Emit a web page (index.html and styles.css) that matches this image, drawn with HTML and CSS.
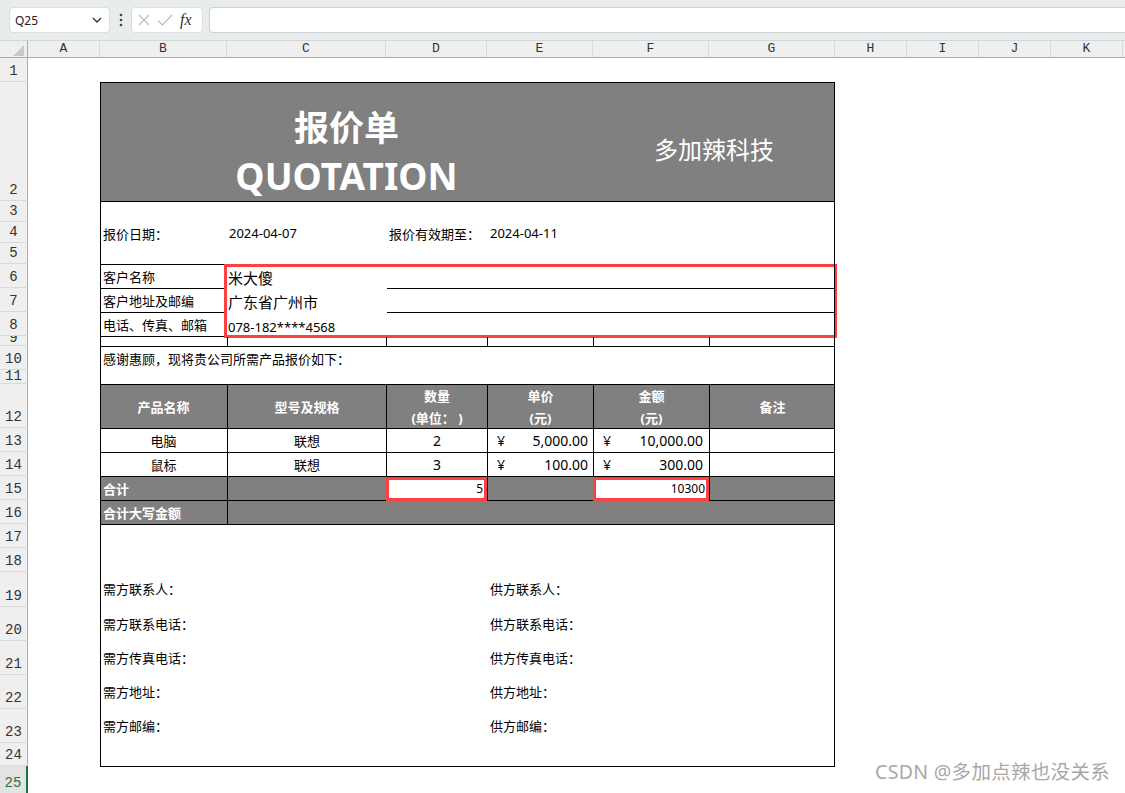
FILE: index.html
```html
<!DOCTYPE html>
<html lang="zh-CN">
<head>
<meta charset="utf-8">
<title>报价单</title>
<link rel="stylesheet" href="styles.css">
</head>
<body>
<div class="app">
  <div class="formula-bar">
    <div class="name-box">
      <span class="name">Q25</span>
      <svg class="chev" width="10" height="6" viewBox="0 0 10 6"><path d="M1 1l4 4 4-4" fill="none" stroke="#333" stroke-width="1.3"/></svg>
    </div>
    <div class="bar-dots">
      <svg width="4" height="14" viewBox="0 0 4 14"><circle cx="2" cy="2" r="1.3" fill="#444"/><circle cx="2" cy="7" r="1.3" fill="#444"/><circle cx="2" cy="12" r="1.3" fill="#444"/></svg>
    </div>
    <div class="fx-box">
      <svg width="14" height="14" viewBox="0 0 14 14"><path d="M2 2l10 10M12 2L2 12" fill="none" stroke="#bcbcbc" stroke-width="1.2"/></svg>
      <svg width="16" height="14" viewBox="0 0 16 14"><path d="M1 7.5l4.5 4.5L15 2" fill="none" stroke="#bcbcbc" stroke-width="1.2"/></svg>
      <span class="fx">fx</span>
    </div>
    <div class="formula-input"></div>
  </div>

  <div class="col-headers">
    <div class="corner"><svg width="27" height="16" viewBox="0 0 27 16"><polygon points="24,3 24,14 13,14" fill="#c9c9c9"/></svg></div>
    <div class="ch wa">A</div>
    <div class="ch wb">B</div>
    <div class="ch wc">C</div>
    <div class="ch wd">D</div>
    <div class="ch we">E</div>
    <div class="ch wf">F</div>
    <div class="ch wg">G</div>
    <div class="ch wa">H</div>
    <div class="ch wa">I</div>
    <div class="ch wa">J</div>
    <div class="ch wa">K</div>
  </div>

  <div class="sheet">
    <div class="row-headers">
      <div class="rh h24">1</div>
      <div class="rh h119">2</div>
      <div class="rh h21">3</div>
      <div class="rh h21">4</div>
      <div class="rh h21">5</div>
      <div class="rh h24">6</div>
      <div class="rh h24">7</div>
      <div class="rh h24">8</div>
      <div class="rh h10">9</div>
      <div class="rh h24">10</div>
      <div class="rh h14">11</div>
      <div class="rh h44">12</div>
      <div class="rh h24">13</div>
      <div class="rh h24">14</div>
      <div class="rh h24">15</div>
      <div class="rh h24">16</div>
      <div class="rh h24">17</div>
      <div class="rh h24">18</div>
      <div class="rh h35">19</div>
      <div class="rh h34">20</div>
      <div class="rh h34">21</div>
      <div class="rh h34">22</div>
      <div class="rh h34">23</div>
      <div class="rh h23">24</div>
      <div class="rh h27 sel">25</div>
    </div>

    <div class="canvas">
      <div class="quote">
        <div class="q-title">
          <div class="title-main">
            <div class="t-cn">报价单</div>
            <div class="t-en">QUOTATION</div>
          </div>
          <div class="title-co">多加辣科技</div>
        </div>

        <div class="q-dates">
          <div class="dc">报价日期：</div>
          <div class="dc">2024-04-07</div>
          <div class="dc">报价有效期至：</div>
          <div class="dc">2024-04-11</div>
        </div>

        <div class="q-customer">
          <div class="cust-top">
            <div class="cust-labels">
              <div class="lbl">客户名称</div>
              <div class="lbl">客户地址及邮编</div>
              <div class="lbl">电话、传真、邮箱</div>
            </div>
            <div class="cust-values">
              <div class="val">米大傻</div>
              <div class="rest"></div>
              <div class="val">广东省广州市</div>
              <div class="rest"></div>
              <div class="val tel">078-182****4568</div>
              <div class="rest"></div>
            </div>
          </div>
          <div class="cust-gap">
            <div class="gc"></div><div class="gc"></div><div class="gc"></div><div class="gc"></div><div class="gc"></div><div class="gc"></div>
          </div>
        </div>

        <div class="q-intro">感谢惠顾，现将贵公司所需产品报价如下：</div>

        <div class="q-items">
          <div class="ic head">产品名称</div>
          <div class="ic head">型号及规格</div>
          <div class="ic head">数量<br>(单位：&nbsp;)</div>
          <div class="ic head">单价<br>(元)</div>
          <div class="ic head">金额<br>(元)</div>
          <div class="ic head">备注</div>

          <div class="ic">电脑</div>
          <div class="ic">联想</div>
          <div class="ic num">2</div>
          <div class="ic money"><span>¥</span><span>5,000.00</span></div>
          <div class="ic money mf"><span>¥</span><span>10,000.00</span></div>
          <div class="ic"></div>

          <div class="ic">鼠标</div>
          <div class="ic">联想</div>
          <div class="ic num">3</div>
          <div class="ic money"><span>¥</span><span>100.00</span></div>
          <div class="ic money mf"><span>¥</span><span>300.00</span></div>
          <div class="ic"></div>

          <div class="ic gray strong left">合计</div>
          <div class="ic gray"></div>
          <div class="ic sum">5</div>
          <div class="ic gray"></div>
          <div class="ic sum">10300</div>
          <div class="ic gray"></div>

          <div class="ic gray strong left">合计大写金额</div>
          <div class="ic gray span5"></div>
        </div>

        <div class="q-sign">
          <div class="sg">需方联系人：</div><div class="sg">供方联系人：</div>
          <div class="sg">需方联系电话：</div><div class="sg">供方联系电话：</div>
          <div class="sg">需方传真电话：</div><div class="sg">供方传真电话：</div>
          <div class="sg">需方地址：</div><div class="sg">供方地址：</div>
          <div class="sg">需方邮编：</div><div class="sg">供方邮编：</div>
        </div>
      </div>
    </div>
  </div>

  <div class="watermark">CSDN @多加点辣也没关系</div>
</div>
</body>
</html>
```

FILE: styles.css
```css
* { box-sizing: border-box; margin: 0; padding: 0; }

html, body {
  width: 1125px;
  height: 793px;
  overflow: hidden;
  background: #fff;
}

body {
  font-family: "Noto Sans", "Noto Sans CJK SC", sans-serif;
  color: #000;
}

.app {
  position: relative;
  width: 1125px;
  height: 793px;
  overflow: hidden;
  display: flex;
  flex-direction: column;
}

/* ---------- formula bar ---------- */
.formula-bar {
  height: 41px;
  flex: none;
  background: #e9ecec;
  border-bottom: 1px solid #d3d6d6;
  display: flex;
  align-items: flex-start;
  padding: 7px 0 0 9px;
}

.name-box {
  width: 101px;
  height: 26px;
  background: #fff;
  border: 1px solid #dcdede;
  border-radius: 4px;
  display: flex;
  align-items: center;
  justify-content: space-between;
  padding: 0 7px 0 5px;
  font-size: 12px;
  color: #222;
}

.bar-dots {
  width: 21px;
  height: 26px;
  display: flex;
  align-items: center;
  justify-content: center;
}

.fx-box {
  width: 72px;
  height: 26px;
  background: #fff;
  border: 1px solid #dcdede;
  border-radius: 4px;
  display: flex;
  align-items: center;
  gap: 6px;
  padding-left: 5px;
}

.fx {
  font-family: "Liberation Serif", serif;
  font-style: italic;
  font-size: 16px;
  color: #333;
  margin-left: 1px;
}

.formula-input {
  flex: 1;
  margin-left: 6px;
  height: 26px;
  background: #fff;
  border: 1px solid #cfd2d2;
  border-right: none;
  border-radius: 4px 0 0 4px;
}

/* ---------- column headers ---------- */
.col-headers {
  height: 17px;
  flex: none;
  display: flex;
  background: #efefef;
  border-bottom: 1px solid #ababab;
}

.corner {
  width: 28px;
  flex: none;
  border-right: 1px solid #ababab;
}

.ch {
  flex: none;
  border-right: 1px solid #dadada;
  text-align: center;
  font-family: "Liberation Mono", monospace;
  font-size: 13px;
  line-height: 16px;
  color: #333;
}

.wa { width: 72px; }
.wb { width: 127px; }
.wc { width: 159px; }
.wd { width: 101px; }
.we { width: 106px; }
.wf { width: 116px; }
.wg { width: 126px; }

/* ---------- sheet ---------- */
.sheet {
  flex: 1;
  display: flex;
  min-height: 0;
}

.row-headers {
  width: 28px;
  flex: none;
  display: flex;
  flex-direction: column;
  background: #efefef;
}

.rh {
  flex: none;
  border-bottom: 1px solid #dadada;
  border-right: 1px solid #ababab;
  display: flex;
  align-items: flex-end;
  justify-content: center;
  overflow: hidden;
  font-family: "Liberation Mono", monospace;
  font-size: 14px;
  line-height: 16px;
  padding-bottom: 2px;
  color: #333;
}

.rh.sel {
  background: #e3e3e3;
  color: #217346;
  border-right: 2px solid #217346;
  border-bottom: none;
}

.h10 { height: 10px; padding-bottom: 0; line-height: 13px; }
.h14 { height: 14px; padding-bottom: 0; line-height: 13px; }
.h21 { height: 21px; }
.h23 { height: 23px; }
.h24 { height: 24px; }
.h27 { height: 27px; }
.h34 { height: 34px; }
.h35 { height: 35px; }
.h44 { height: 44px; }
.h119 { height: 119px; }

.canvas {
  flex: 1;
  background: #fff;
  padding: 24px 0 0 72px;
}

/* ---------- quotation ---------- */
.quote {
  --cols: 127px 159px 101px 106px 116px 126px;
  width: 735px;
  height: 685px;
  outline: 1px solid #000;
  outline-offset: -1px;
  display: flex;
  flex-direction: column;
  font-size: 13px;
}

.q-title {
  height: 120px;
  flex: none;
  display: grid;
  grid-template-columns: 493px 242px;
  background: #808080;
  border-bottom: 1px solid #000;
  color: #fff;
}

.title-main {
  display: flex;
  flex-direction: column;
  align-items: center;
  justify-content: center;
  padding-top: 21px;
}

.t-cn {
  font-size: 35px;
  font-weight: 700;
  line-height: 48px;
}

.t-en {
  font-size: 37px;
  font-weight: 700;
  line-height: 48px;
}

.title-co {
  display: flex;
  align-items: center;
  justify-content: center;
  padding-top: 14px;
  font-size: 24px;
}

.q-dates {
  height: 63px;
  flex: none;
  display: grid;
  grid-template-columns: var(--cols);
  align-items: center;
  border-bottom: 1px solid #000;
}

.dc { padding-left: 3px; }
.dc:nth-child(2) { padding-left: 2px; }

/* customer block */
.q-customer {
  height: 82px;
  flex: none;
  display: flex;
  flex-direction: column;
}

.cust-top {
  height: 72px;
  display: flex;
}

.cust-labels {
  width: 127px;
  flex: none;
  display: flex;
  flex-direction: column;
}

.lbl {
  height: 24px;
  border-bottom: 1px solid #000;
  display: flex;
  align-items: center;
  padding-left: 3px;
}

.cust-values {
  flex: 1;
  display: grid;
  grid-template-columns: 159px 449px;
  grid-template-rows: 24px 24px 24px;
  border-left: 1px solid #000;
  margin-left: -2px;
  margin-right: 2px;
  padding-left: 2px;
  outline: 3px solid #ff4040;
  outline-offset: -2px;
}

.val {
  display: flex;
  align-items: center;
  padding-left: 0;
  font-size: 15px;
}

.val.tel {
  font-size: 13px;
  padding-top: 3px;
}

.rest { border-bottom: 1px solid #000; }

.cust-gap {
  height: 10px;
  display: grid;
  grid-template-columns: var(--cols);
  border-bottom: 1px solid #000;
}

.gc + .gc { border-left: 1px solid #000; }

.q-intro {
  height: 38px;
  flex: none;
  border-bottom: 1px solid #000;
  line-height: 24px;
  padding-left: 3px;
}

/* items table */
.q-items {
  height: 140px;
  flex: none;
  display: grid;
  grid-template-columns: var(--cols);
  grid-template-rows: 44px 24px 24px 24px 24px;
}

.ic {
  display: flex;
  align-items: center;
  justify-content: center;
  text-align: center;
  border-bottom: 1px solid #000;
  border-left: 1px solid #000;
}

.ic:nth-child(6n+1) { border-left: none; }

.ic.head {
  background: #808080;
  color: #fff;
  font-weight: 700;
  line-height: 22px;
}

.ic.num { font-size: 14px; }

.ic.money {
  justify-content: space-between;
  padding: 0 5px 0 9px;
  font-size: 14px;
}

.ic.money.mf { padding-right: 6px; }

.ic.gray { background: #808080; }

.ic.strong {
  color: #fff;
  font-weight: 700;
}

.ic.left {
  justify-content: flex-start;
  padding-left: 3px;
}

.ic.sum {
  justify-content: flex-end;
  padding-right: 4px;
  font-size: 12px;
  background: #fff;
  outline: 3px solid #ff4040;
  outline-offset: -3px;
}

.ic.span5 { grid-column: span 5; }

/* signature block */
.q-sign {
  flex: 1;
  display: grid;
  grid-template-columns: 387px 348px;
  grid-template-rows: 35px 34px 34px 34px 34px;
  align-content: start;
  padding-top: 46px;
}

.sg {
  display: flex;
  align-items: center;
  padding-left: 3px;
}

/* watermark */
.watermark {
  position: absolute;
  right: 15px;
  bottom: 8px;
  font-family: "Noto Sans", "Noto Sans CJK SC", sans-serif;
  font-size: 19.5px;
  color: #a8a8a8;
  letter-spacing: 0.3px;
}
```
